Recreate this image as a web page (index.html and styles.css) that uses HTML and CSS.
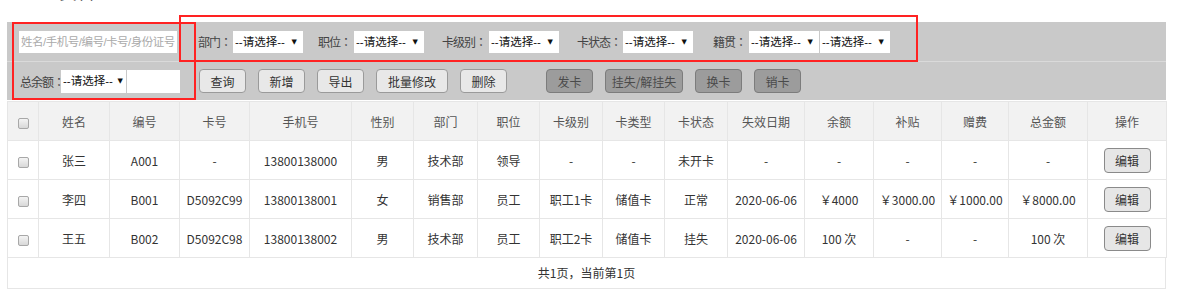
FILE: index.html
```html
<!DOCTYPE html>
<html>
<head>
  <title>人员管理</title>
  <link rel="stylesheet" href="styles.css">
</head>
<body>

<div class="page">
  <h3 class="title">1.1 人员管理</h3>

  <div class="toolbar">
    <div class="bar-row">
      <input class="search" type="text" placeholder="姓名/手机号/编号/卡号/身份证号">
      <div class="field f-1"><label>部门：</label><span class="sel"><select><option>--请选择--</option></select></span></div>
      <div class="field f-2"><label>职位：</label><span class="sel"><select><option>--请选择--</option></select></span></div>
      <div class="field f-3"><label>卡级别：</label><span class="sel"><select><option>--请选择--</option></select></span></div>
      <div class="field f-4"><label>卡状态：</label><span class="sel"><select><option>--请选择--</option></select></span></div>
      <div class="field f-5"><label>籍贯：</label><span class="sel"><select><option>--请选择--</option></select></span><span class="sel"><select><option>--请选择--</option></select></span></div>
    </div>
    <div class="bar-row row2">
      <div class="field total"><label>总余额：</label><span class="sel small"><select><option>--请选择--</option></select></span><input class="amount" type="text"></div>
      <div class="btns">
        <button>查询</button>
        <button>新增</button>
        <button>导出</button>
        <button class="wide">批量修改</button>
        <button>删除</button>
      </div>
      <div class="btns dark">
        <button>发卡</button>
        <button class="wider">挂失/解挂失</button>
        <button>换卡</button>
        <button>销卡</button>
      </div>
    </div>

    <div class="mark mark-left"></div>
    <div class="mark mark-top"></div>
  </div>

  <table class="grid">
    <colgroup>
      <col style="width:31px"><col style="width:71px"><col style="width:70px"><col style="width:70px">
      <col style="width:102px"><col style="width:62px"><col style="width:64px"><col style="width:62px">
      <col style="width:63px"><col style="width:62px"><col style="width:63px"><col style="width:77px">
      <col style="width:69px"><col style="width:68px"><col style="width:67px"><col style="width:79px">
      <col style="width:79px">
    </colgroup>
    <thead>
      <tr>
        <th><input type="checkbox" class="chk"></th>
        <th>姓名</th><th>编号</th><th>卡号</th><th>手机号</th><th>性别</th>
        <th>部门</th><th>职位</th><th>卡级别</th><th>卡类型</th><th>卡状态</th>
        <th>失效日期</th><th>余额</th><th>补贴</th><th>赠费</th><th>总金额</th><th>操作</th>
      </tr>
    </thead>
    <tbody>
      <tr>
        <td><input type="checkbox" class="chk"></td>
        <td>张三</td><td>A001</td><td>-</td><td>13800138000</td><td>男</td>
        <td>技术部</td><td>领导</td><td>-</td><td>-</td><td>未开卡</td>
        <td>-</td><td>-</td><td>-</td><td>-</td><td>-</td>
        <td><button class="edit">编辑</button></td>
      </tr>
      <tr>
        <td><input type="checkbox" class="chk"></td>
        <td>李四</td><td>B001</td><td>D5092C99</td><td>13800138001</td><td>女</td>
        <td>销售部</td><td>员工</td><td>职工1卡</td><td>储值卡</td><td>正常</td>
        <td>2020-06-06</td><td>￥4000</td><td>￥3000.00</td><td>￥1000.00</td><td>￥8000.00</td>
        <td><button class="edit">编辑</button></td>
      </tr>
      <tr>
        <td><input type="checkbox" class="chk"></td>
        <td>王五</td><td>B002</td><td>D5092C98</td><td>13800138002</td><td>男</td>
        <td>技术部</td><td>员工</td><td>职工2卡</td><td>储值卡</td><td>挂失</td>
        <td>2020-06-06</td><td>100 次</td><td>-</td><td>-</td><td>100 次</td>
        <td><button class="edit">编辑</button></td>
      </tr>
    </tbody>
  </table>
  <div class="pager">共1页，当前第1页</div>
</div>

</body>
</html>
```

FILE: styles.css
```css
body {
  margin: 0;
  font-family: "Noto Sans CJK SC", "Noto Sans", sans-serif;
  font-size: 12px;
  color: #333;
  background: #fff;
}

.page {
  width: 1159px;
  margin-left: 7px;
}

.title {
  margin: -19px 0 21px 5px;
  font-size: 18px;
  line-height: 20px;
  font-weight: normal;
  color: #333;
}

/* toolbar */
.toolbar {
  position: relative;
  background: #c9c9c9;
}

.bar-row {
  display: flex;
  align-items: center;
  height: 39px;
  border-bottom: 1px solid #dadada;
}

.row2 {
  height: 38px;
  border-bottom: none;
}

.search {
  flex: none;
  width: 158px;
  height: 22px;
  margin-left: 12px;
  padding: 0 2px;
  box-sizing: border-box;
  border: none;
  background: #fff;
  font: 11.5px "Liberation Sans", "Noto Sans CJK SC", sans-serif;
  letter-spacing: -0.5px;
}

.search::placeholder { color: #aaa; }

.field {
  display: flex;
  align-items: center;
  flex: none;
}

.field label {
  flex: none;
  color: #444;
  white-space: nowrap;
  letter-spacing: -1px;
  font-family: "Noto Sans CJK JP", "Noto Sans CJK SC", sans-serif;
}

.f-1 { margin-left: 21px; }
.f-2 { margin-left: 14px; }
.f-3 { margin-left: 17px; }
.f-4 { margin-left: 17px; }
.f-5 { margin-left: 19px; }

.f-1 label { width: 35px; }
.f-2 label { width: 36px; }
.f-3 label { width: 47px; }
.f-4 label { width: 46px; }
.f-5 label { width: 36px; }
.total label { width: 41px; }

.sel {
  position: relative;
  display: inline-block;
  margin-right: 1px;
}

.sel select {
  appearance: none;
  -webkit-appearance: none;
  display: block;
  width: 70px;
  height: 22px;
  padding: 0 0 0 2px;
  border: none;
  border-radius: 0;
  background: #fff;
  color: #111;
  font: 11.5px "Liberation Sans", "Noto Sans CJK SC", sans-serif;
  outline: none;
}

.sel::after {
  content: "▼";
  position: absolute;
  right: 6px;
  top: 5px;
  font: 7px/12px "DejaVu Sans", sans-serif;
  color: #111;
  pointer-events: none;
}

.sel.small select {
  width: 65px;
  height: 23px;
}

.sel.small::after { right: 3px; }

.total { margin-left: 13px; }

.amount {
  width: 53px;
  height: 23px;
  box-sizing: border-box;
  border: none;
  background: #fff;
}

.btns {
  display: flex;
  gap: 12px;
  margin-left: 19px;
}

.btns.dark { margin-left: 39px; }

.btns button {
  width: 47px;
  height: 24px;
  padding: 0;
  background: #e8e8e8;
  color: #333;
  border: 1px solid #9a9a9a;
  border-radius: 4px;
  font: 12px "Noto Sans CJK SC", sans-serif;
  cursor: pointer;
}

.btns button.wide { width: 72px; }
.btns button.wider { width: 78px; }

.btns.dark button {
  background: #9c9c9c;
  color: #4a4a4a;
  border-color: #7c7c7c;
}

/* red annotation boxes */
.mark {
  position: absolute;
  box-sizing: border-box;
  border: 2px solid #f22;
  pointer-events: none;
}

.mark-left {
  left: 5px;
  top: 0;
  width: 184px;
  height: 78px;
}

.mark-top {
  left: 172px;
  top: -7px;
  width: 739px;
  height: 47px;
}

/* table */
.grid {
  width: 1159px;
  table-layout: fixed;
  border-collapse: collapse;
  margin-top: 1px;
}

.grid th, .grid td {
  height: 38px;
  padding: 0;
  border: 1px solid #e6e6e6;
  text-align: center;
  font-weight: normal;
  white-space: nowrap;
}

.grid th {
  background: #f2f2f2;
  color: #555;
}

.grid td { color: #333; }

.chk {
  appearance: none;
  -webkit-appearance: none;
  width: 11px;
  height: 11px;
  margin: 0;
  vertical-align: middle;
  border: 1px solid #a8a8a8;
  border-radius: 2px;
  background: linear-gradient(#f4f4f4, #d8d8d8);
}

.edit {
  width: 47px;
  height: 25px;
  padding: 0;
  background: #e6e6e6;
  color: #333;
  border: 1px solid #8a8a8a;
  border-radius: 4px;
  font: 12px "Noto Sans CJK SC", sans-serif;
  cursor: pointer;
}

.pager {
  height: 30px;
  line-height: 30px;
  width: 1157px;
  border: 1px solid #e6e6e6;
  border-top: none;
  text-align: center;
  color: #333;
}
```
